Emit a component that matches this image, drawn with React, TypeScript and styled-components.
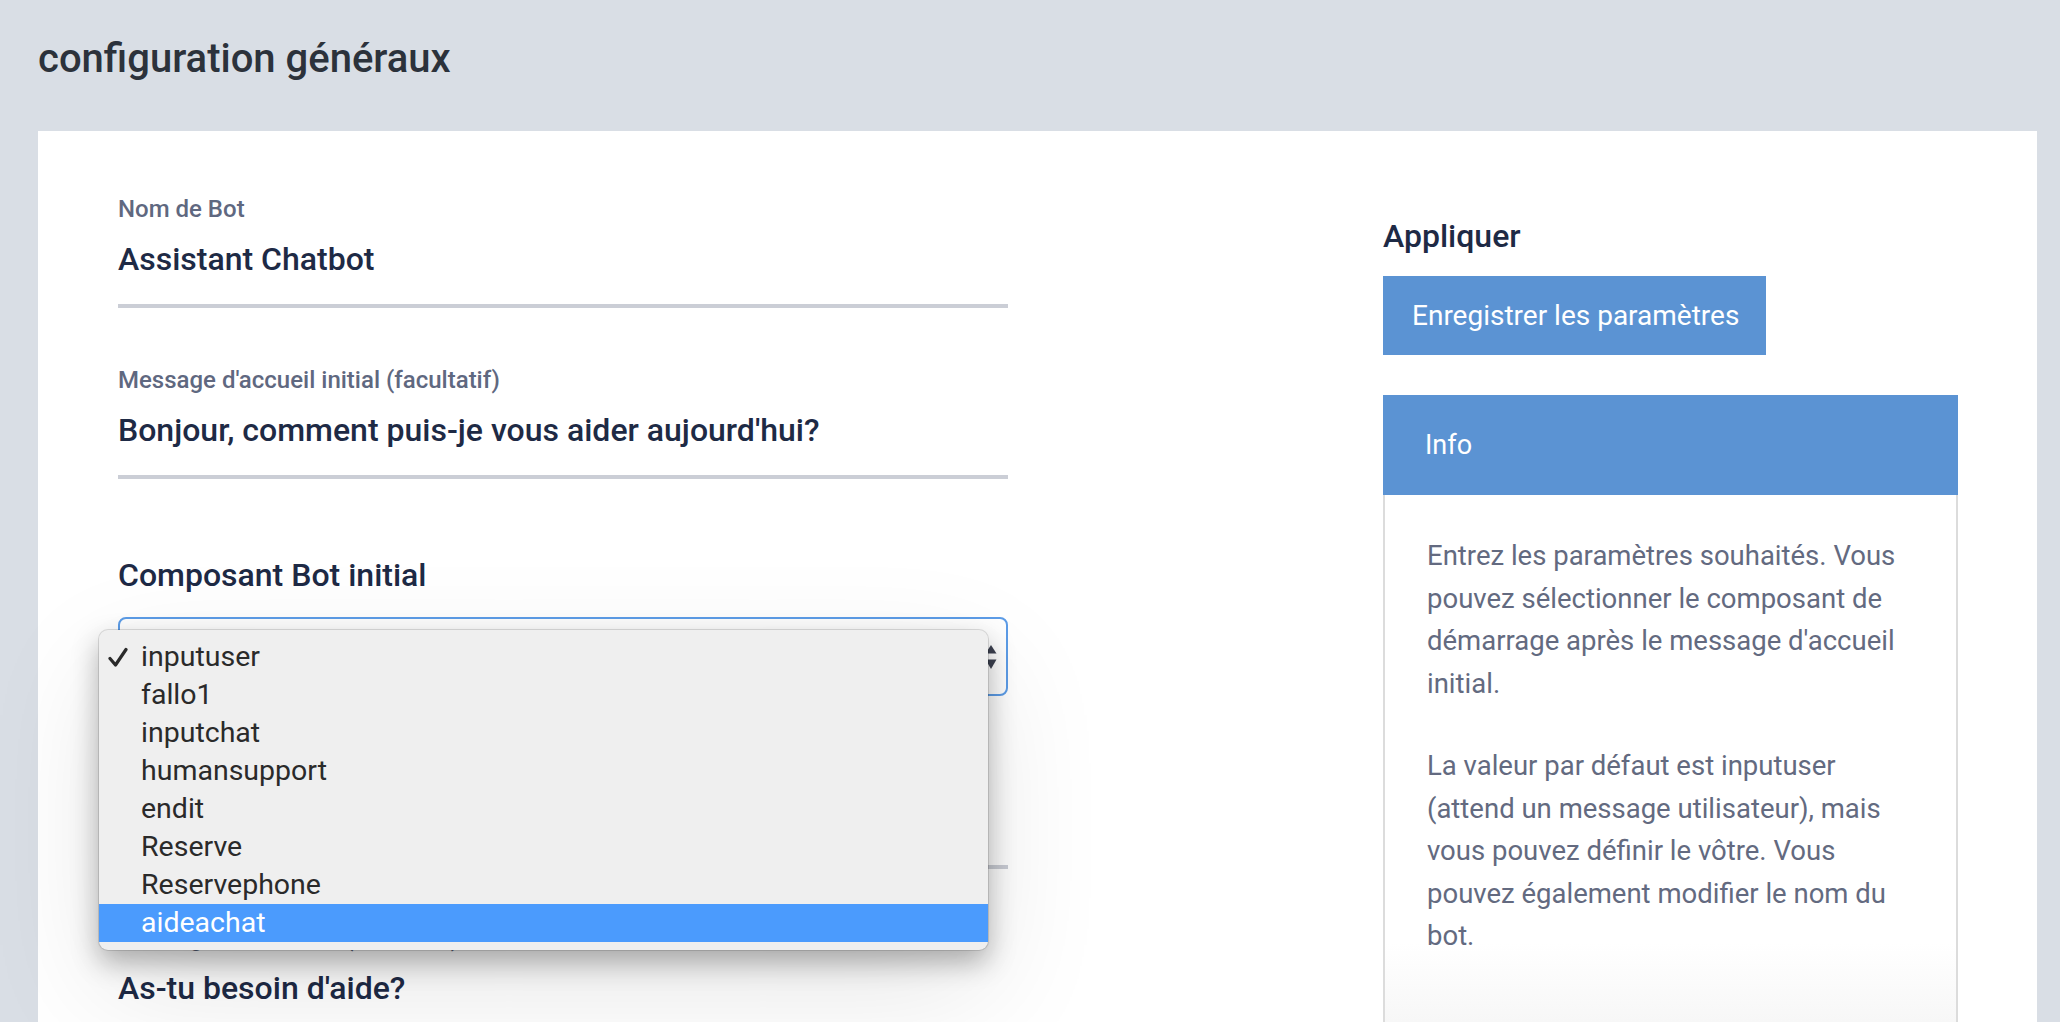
import React from 'react';
import styled, { createGlobalStyle } from 'styled-components';

const GlobalStyle = createGlobalStyle`
	html,
	body {
		margin: 0;
		padding: 0;
		background-color: #d9dee5;
		font-family: Roboto, 'Liberation Sans', sans-serif;
		overflow: hidden;
	}
	* {
		box-sizing: border-box;
	}
`;

const Page = styled.div`
	height: 1022px;
	display: flex;
	flex-direction: column;
	overflow: hidden;
`;

const Header = styled.header`
	height: 131px;
	padding: 35px 38px 0 38px;
	flex-shrink: 0;
`;

const Title = styled.h1`
	margin: 0;
	font-size: 40px;
	line-height: 48px;
	font-weight: 500;
	color: #2c323b;
`;

const Card = styled.section`
	flex: 1;
	margin: 0 23px 0 38px;
	background-color: #ffffff;
	padding: 64px 79px 0 80px;
	display: grid;
	grid-template-columns: 1fr 575px;
	column-gap: 40px;
`;

const LeftColumn = styled.div`
	display: flex;
	flex-direction: column;
	width: 890px;
`;

const Field = styled.div<{ gap?: number }>`
	display: flex;
	flex-direction: column;
	margin-top: ${(props) => props.gap ?? 0}px;
	border-bottom: 4px solid #cbced6;
	padding-bottom: 25px;
`;

const Label = styled.label<{ gap?: number }>`
	margin-top: ${(props) => props.gap ?? 0}px;
	font-size: 24px;
	line-height: 28px;
	font-weight: 500;
	color: #5f6880;
	margin-bottom: 16px;
`;

const Value = styled.div`
	font-size: 32px;
	line-height: 40px;
	font-weight: 500;
	color: #1e2a45;
`;

const Heading = styled.h2<{ gap?: number }>`
	margin: ${(props) => props.gap ?? 0}px 0 0 0;
	font-size: 32px;
	line-height: 40px;
	font-weight: 500;
	color: #1e2a45;
`;

const SelectWrap = styled.div`
	position: relative;
	margin-top: 22px;
	height: 79px;
`;

const SelectBox = styled.div`
	height: 100%;
	border: 2px solid #5d9de8;
	border-radius: 8px;
	display: flex;
	align-items: center;
	justify-content: flex-end;
	padding-right: 9px;
`;

const Popup = styled.ul`
	position: absolute;
	top: 13px;
	left: -19px;
	width: 889px;
	margin: 0;
	padding: 8px 0;
	list-style: none;
	background-color: #efefef;
	border-radius: 9px;
	box-shadow: 0 0 0 1px rgba(0, 0, 0, 0.12), 0 12px 28px rgba(0, 0, 0, 0.3),
		0 40px 120px rgba(0, 0, 0, 0.1);
	z-index: 5;
`;

const Option = styled.li<{ active?: boolean }>`
	position: relative;
	height: 38px;
	line-height: 38px;
	padding-left: 42px;
	font-size: 28.5px;
	color: ${(props) => (props.active ? '#ffffff' : '#2a2a2a')};
	background-color: ${(props) => (props.active ? '#4b9bfd' : 'transparent')};
`;

const CheckMark = styled.svg`
	position: absolute;
	left: 9px;
	top: 9px;
`;

const RightColumn = styled.aside`
	display: flex;
	flex-direction: column;
	align-items: flex-start;
	padding-top: 21px;
`;

const SaveButton = styled.button`
	margin-top: 20px;
	height: 79px;
	padding: 0 27px 0 29px;
	border: none;
	background-color: #5b93d3;
	color: #ffffff;
	font-family: Roboto, 'Liberation Sans', sans-serif;
	font-size: 28px;
	font-weight: 400;
	cursor: pointer;
`;

const InfoPanel = styled.div`
	margin-top: 40px;
	width: 100%;
	flex: 1;
	display: flex;
	flex-direction: column;
`;

const InfoHeader = styled.div`
	height: 100px;
	background-color: #5b93d3;
	color: #ffffff;
	font-size: 27px;
	display: flex;
	align-items: center;
	padding-left: 42px;
`;

const InfoBody = styled.div`
	flex: 1;
	border-left: 2px solid #dcdcdc;
	border-right: 2px solid #dcdcdc;
	padding: 40px 30px 0 42px;
	color: #636a80;
	font-size: 27.5px;
	line-height: 42.5px;
	background: linear-gradient(to bottom, #ffffff 85%, #f7f7f7 100%);
`;

const Paragraph = styled.p`
	margin: 0 0 40px 0;
`;

const Stepper = () => (
	<svg width="12" height="28" viewBox="0 0 12 28">
		<path d="M6 2 L11.5 10.5 L0.5 10.5 Z" fill="#3c4150" />
		<path d="M6 26 L11.5 16.5 L0.5 16.5 Z" fill="#3c4150" />
	</svg>
);

const Check = () => (
	<CheckMark width="20" height="21" viewBox="0 0 20 21">
		<path
			d="M2 11.5 L7.5 18 L18 2.5"
			fill="none"
			stroke="#2a2a2a"
			strokeWidth="3.2"
			strokeLinecap="round"
			strokeLinejoin="round"
		/>
	</CheckMark>
);

const options = [
	'inputuser',
	'fallo1',
	'inputchat',
	'humansupport',
	'endit',
	'Reserve',
	'Reservephone',
	'aideachat',
];

const App = () => {
	return (
		<Page>
			<GlobalStyle />
			<Header>
				<Title>configuration généraux</Title>
			</Header>
			<Card>
				<LeftColumn>
					<Field>
						<Label>Nom de Bot</Label>
						<Value>Assistant Chatbot</Value>
					</Field>
					<Field gap={58}>
						<Label>Message d'accueil initial (facultatif)</Label>
						<Value>Bonjour, comment puis-je vous aider aujourd'hui?</Value>
					</Field>
					<Heading gap={76}>Composant Bot initial</Heading>
					<SelectWrap>
						<SelectBox>
							<Stepper />
						</SelectBox>
						<Popup>
							{options.map((option, id) => (
								<Option key={option} active={id === options.length - 1}>
									{id === 0 ? <Check /> : null}
									{option}
								</Option>
							))}
						</Popup>
					</SelectWrap>
					<Field gap={60}>
						<Label>Message d'erreur (facultatif)</Label>
						<Value>Désolé, je n'ai pas compris.</Value>
					</Field>
					<Label gap={55}>Message de fallback (facultatif)</Label>
					<Value>As-tu besoin d'aide?</Value>
				</LeftColumn>
				<RightColumn>
					<Heading>Appliquer</Heading>
					<SaveButton>Enregistrer les paramètres</SaveButton>
					<InfoPanel>
						<InfoHeader>Info</InfoHeader>
						<InfoBody>
							<Paragraph>
								Entrez les paramètres souhaités. Vous pouvez sélectionner le
								composant de démarrage après le message d'accueil initial.
							</Paragraph>
							<Paragraph>
								La valeur par défaut est inputuser (attend un message
								utilisateur), mais vous pouvez définir le vôtre. Vous pouvez
								également modifier le nom du bot.
							</Paragraph>
						</InfoBody>
					</InfoPanel>
				</RightColumn>
			</Card>
		</Page>
	);
};

export default App;
